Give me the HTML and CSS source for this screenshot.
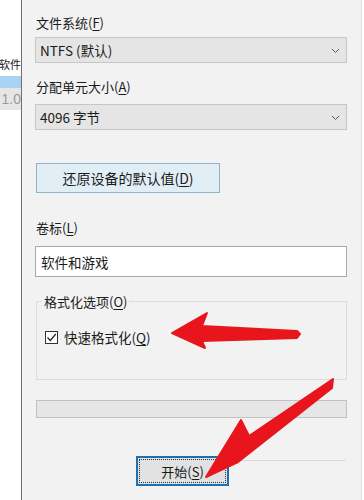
FILE: index.html
```html
<!DOCTYPE html>
<html lang="zh-CN">
<head>
<meta charset="UTF-8" />
<title>格式化</title>
<link rel="stylesheet" href="styles.css">
</head>
<body>

<div class="side">
    <div class="side-row name">软件</div>
    <div class="side-row selected"></div>
    <div class="side-row version">1.0</div>
</div>

<div class="dialog">
    <div class="label first">文件系统(<u>F</u>)</div>
    <div class="combo">
        <span>NTFS (默认)</span>
        <svg class="chevron" width="9" height="6" viewBox="0 0 9 6"><path d="M1 1 L4.5 4.5 L8 1" fill="none" stroke="#555" stroke-width="1"/></svg>
    </div>

    <div class="label second">分配单元大小(<u>A</u>)</div>
    <div class="combo">
        <span>4096 字节</span>
        <svg class="chevron" width="9" height="6" viewBox="0 0 9 6"><path d="M1 1 L4.5 4.5 L8 1" fill="none" stroke="#555" stroke-width="1"/></svg>
    </div>

    <div class="restore">还原设备的默认值(<u>D</u>)</div>

    <div class="label third">卷标(<u>L</u>)</div>
    <div class="textbox">软件和游戏</div>

    <div class="group">
        <div class="legend">格式化选项(<u>O</u>)</div>
        <div class="check-row">
            <span class="checkbox">
                <svg width="11" height="11" viewBox="0 0 11 11"><path d="M1.5 5.5 L4.3 8.5 L9.8 2" fill="none" stroke="#222" stroke-width="1.2"/></svg>
            </span>
            <span>快速格式化(<u>Q</u>)</span>
        </div>
    </div>

    <div class="progress"></div>

    <div class="buttons">
        <div class="start">开始(<u>S</u>)</div>
        <div class="close"></div>
    </div>
</div>

<!-- red annotation arrows drawn over the dialog -->
<svg class="arrows" width="364" height="500" viewBox="0 0 364 500">
    <polygon points="172,333 207,313 202,326 297,331 300,334 297,338 202,341 205,348" fill="#e8161c" stroke="#e8161c" stroke-width="2" stroke-linejoin="round"/>
    <polygon points="333,379 249,436 241,420 206,477 238,462 332,388" fill="#e8161c" stroke="#e8161c" stroke-width="2" stroke-linejoin="round"/>
</svg>

</body>
</html>
```

FILE: styles.css
```css
body {
    margin: 0;
    width: 364px;
    height: 500px;
    overflow: hidden;
    display: flex;
    background: #fff;
    font-family: "Noto Sans CJK SC", "Liberation Sans", sans-serif;
    font-size: 13px;
    color: #1a1a1a;
    position: relative;
}
u {
    text-decoration: underline;
    text-underline-offset: 2px;
}
.side {
    width: 21px;
    flex: none;
    padding-top: 56px;
    background: #fff;
}
.side-row {
    height: 17px;
    line-height: 17px;
    display: flex;
    justify-content: flex-end;
    overflow: hidden;
    white-space: nowrap;
}
.side-row.name {
    height: 20px;
    font-size: 11px;
}
.side-row.selected {
    height: 12px;
    background: #a9d3f5;
}
.side-row.version {
    height: 22px;
    line-height: 22px;
    background: #e6e6e6;
    color: #9a9a9a;
    font-size: 14px;
    font-family: "Liberation Sans", sans-serif;
}
.dialog {
    width: 341px;
    flex: none;
    background: #f2f2f2;
    border-left: 1px solid #707070;
    border-right: 1px solid #e2e2e2;
    padding: 14px 14px 0 13px;
    box-sizing: border-box;
    height: 500px;
}
.label {
    height: 17px;
    line-height: 17px;
    padding-left: 1px;
}
.label.second {
    margin-top: 15px;
}
.label.third {
    margin-top: 26px;
}
.combo {
    height: 26px;
    margin-top: 6px;
    background: #e5e5e5;
    border: 1px solid #c6c6c6;
    box-sizing: border-box;
    display: flex;
    align-items: center;
    justify-content: space-between;
    padding: 0 6px 0 4px;
    font-size: 13.5px;
}
.label.second + .combo {
    margin-top: 9px;
}
.chevron {
    margin-top: 1px;
}
.restore {
    width: 184px;
    height: 30px;
    margin-top: 33px;
    margin-left: 1px;
    box-sizing: border-box;
    background: #e2eef6;
    border: 1px solid #8fb4c9;
    display: flex;
    align-items: center;
    justify-content: center;
    font-size: 14px;
}
.textbox {
    height: 31px;
    margin-top: 10px;
    background: #fff;
    border: 1px solid #a9a9a9;
    box-sizing: border-box;
    display: flex;
    align-items: center;
    padding-left: 5px;
    font-size: 13.5px;
}
.group {
    height: 79px;
    margin-top: 24px;
    margin-left: 1px;
    border: 1px solid #dcdcdc;
    box-sizing: border-box;
    position: relative;
}
.legend {
    position: absolute;
    top: -9px;
    left: 5px;
    padding: 0 2px;
    background: #f2f2f2;
    line-height: 17px;
}
.check-row {
    display: flex;
    align-items: center;
    gap: 6px;
    margin-top: 25px;
    margin-left: 8px;
    font-size: 13.5px;
}
.checkbox {
    width: 13px;
    height: 13px;
    box-sizing: border-box;
    border: 1px solid #333;
    background: #fff;
    display: flex;
    align-items: center;
    justify-content: center;
}
.progress {
    height: 18px;
    margin-top: 20px;
    margin-left: 1px;
    background: #e6e6e6;
    border: 1px solid #c2c2c2;
    box-sizing: border-box;
}
.buttons {
    display: flex;
    gap: 7px;
    margin-top: 38px;
    padding-left: 101px;
}
.start {
    width: 93px;
    height: 30px;
    box-sizing: border-box;
    background: #e1e1e1;
    border: 2px solid #1f6fb5;
    outline: 1px dotted #333;
    outline-offset: -4px;
    display: flex;
    align-items: center;
    justify-content: center;
}
.close {
    width: 110px;
    height: 26px;
    margin-top: 4px;
    border-top: 1px solid #dadada;
    box-sizing: border-box;
}
.arrows {
    position: absolute;
    left: 0;
    top: 0;
    pointer-events: none;
}
```
